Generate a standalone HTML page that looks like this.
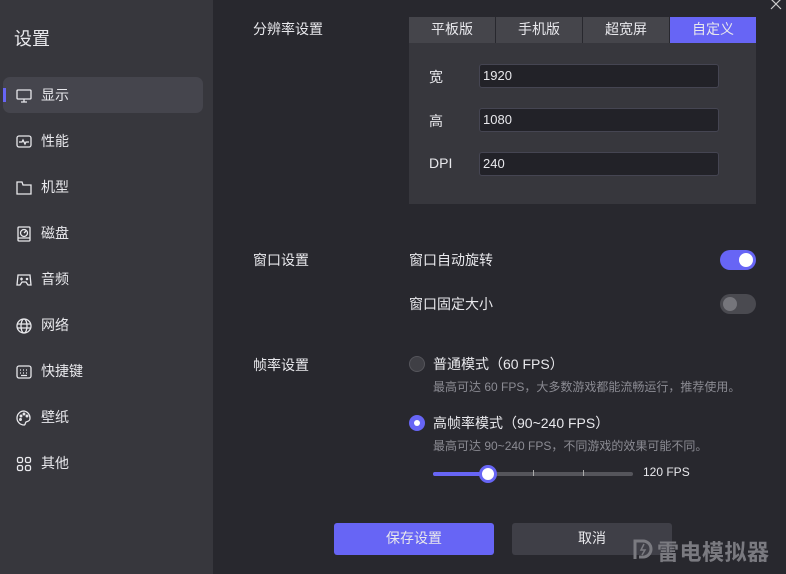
<!DOCTYPE html>
<html><head><meta charset="utf-8"><style>
*{margin:0;padding:0;box-sizing:border-box}
body{width:786px;height:574px;background:#28282e;font-family:"Liberation Sans","Noto Sans CJK SC",sans-serif;color:#e8e8ec;position:relative;overflow:hidden;font-size:14px}
.a{position:absolute}
.side{left:0;top:0;width:213px;height:574px;background:#37373d}
.item{left:3px;width:200px;height:36px;border-radius:7px}
.tab{top:17px;height:26px;width:86px;background:#45454b;text-align:center;line-height:24px;font-size:14px}
.inp{left:479px;width:240px;height:24px;background:#222228;border:1px solid #454552;border-radius:3px;font-size:13px;line-height:21px;padding-left:3px}
.lab{font-size:14px}
.tog{width:36px;height:20px;border-radius:10px}
.tog i{position:absolute;top:3px;width:14px;height:14px;border-radius:50%}
.desc{font-size:12px;color:#8b8b93}
.btn{top:523px;width:160px;height:32px;border-radius:3px;text-align:center;line-height:31px;font-size:14px}
</style></head><body>
<div class="a side"></div>
<div class="a" style="left:14px;top:25px;font-size:18px">设置</div>
<div class="a item" style="top:77px;background:#45454d"></div>
<div class="a" style="left:3px;top:88px;width:3px;height:14px;background:#6765f5"></div>
<svg class="a" style="left:16px;top:88px" width="16" height="16" fill="none" stroke="#e8e8ec" stroke-width="1.3"><rect x="1" y="2" width="14" height="9" rx="1"/><path d="M8 11v3M5 14h6"/></svg>
<div class="a" style="left:41px;top:85px">显示</div>
<svg class="a" style="left:16px;top:134px" width="16" height="16" fill="none" stroke="#e8e8ec" stroke-width="1.3"><rect x="1" y="2" width="14" height="11" rx="2"/><path d="M3 8h3l1-2 2 4 1-2h3"/></svg>
<div class="a" style="left:41px;top:131px">性能</div>
<svg class="a" style="left:16px;top:180px" width="16" height="16" fill="none" stroke="#e8e8ec" stroke-width="1.3"><path d="M1 2h5l1 3h8v9H1z"/></svg>
<div class="a" style="left:41px;top:177px">机型</div>
<svg class="a" style="left:16px;top:226px" width="16" height="16" fill="none" stroke="#e8e8ec" stroke-width="1.3"><rect x="2" y="1" width="12" height="14" rx="1"/><circle cx="8" cy="7" r="3.5"/><path d="M8 7l2-2M2 12h12"/></svg>
<div class="a" style="left:41px;top:223px">磁盘</div>
<svg class="a" style="left:16px;top:272px" width="16" height="16" fill="none" stroke="#e8e8ec" stroke-width="1.3"><path d="M2 3h12l1 10-3 0-2-3H6l-2 3-3 0z"/><path d="M4 7h3M5.5 5.5v3"/><circle cx="11" cy="7" r=".6"/></svg>
<div class="a" style="left:41px;top:269px">音频</div>
<svg class="a" style="left:16px;top:318px" width="16" height="16" fill="none" stroke="#e8e8ec" stroke-width="1.3"><circle cx="8" cy="8" r="7"/><ellipse cx="8" cy="8" rx="3" ry="7"/><path d="M1 6h14M1 10h14"/></svg>
<div class="a" style="left:41px;top:315px">网络</div>
<svg class="a" style="left:16px;top:364px" width="16" height="16" fill="none" stroke="#e8e8ec" stroke-width="1.3"><rect x="1" y="2" width="14" height="12" rx="2"/><path d="M4 6h1M7 6h1M10 6h1M4 9h1M7 9h1M10 9h1M5 11.5h6"/></svg>
<div class="a" style="left:41px;top:361px">快捷键</div>
<svg class="a" style="left:16px;top:410px" width="16" height="16" fill="none" stroke="#e8e8ec" stroke-width="1.3"><path d="M8 1a7 7 0 1 0 0 14c1.5 0 1-2 2-3s4 0 4-4A7 7 0 0 0 8 1z"/><circle cx="5" cy="6" r=".8"/><circle cx="8" cy="4" r=".8"/><circle cx="11" cy="6" r=".8"/><circle cx="4.5" cy="9.5" r=".8"/></svg>
<div class="a" style="left:41px;top:407px">壁纸</div>
<svg class="a" style="left:16px;top:456px" width="16" height="16" fill="none" stroke="#e8e8ec" stroke-width="1.3"><rect x="1.5" y="1.5" width="5" height="5" rx="1.5"/><rect x="9.5" y="1.5" width="5" height="5" rx="1.5"/><rect x="1.5" y="9.5" width="5" height="5" rx="1.5"/><rect x="9.5" y="9.5" width="5" height="5" rx="1.5"/></svg>
<div class="a" style="left:41px;top:453px">其他</div>

<svg class="a" style="left:770px;top:0" width="12" height="10" stroke="#ccc" stroke-width="1.2"><path d="M1 -1l10 10M11 -1L1 9"/></svg>

<div class="a lab" style="left:253px;top:19px">分辨率设置</div>
<div class="a" style="left:409px;top:43px;width:347px;height:161px;background:#37373d"></div>
<div class="a tab" style="left:409px">平板版</div>
<div class="a tab" style="left:496px">手机版</div>
<div class="a tab" style="left:583px">超宽屏</div>
<div class="a tab" style="left:670px;background:#6765f5">自定义</div>
<div class="a lab" style="left:429px;top:67px">宽</div>
<div class="a lab" style="left:429px;top:111px">高</div>
<div class="a lab" style="left:429px;top:155px">DPI</div>
<div class="a inp" style="top:64px">1920</div>
<div class="a inp" style="top:108px">1080</div>
<div class="a inp" style="top:152px">240</div>

<div class="a lab" style="left:253px;top:250px">窗口设置</div>
<div class="a lab" style="left:409px;top:250px">窗口自动旋转</div>
<div class="a tog" style="left:720px;top:250px;background:#6765f5"><i style="left:19px;background:#fff"></i></div>
<div class="a lab" style="left:409px;top:294px">窗口固定大小</div>
<div class="a tog" style="left:720px;top:294px;background:#4a4a50"><i style="left:3px;background:#75757b"></i></div>

<div class="a lab" style="left:253px;top:355px">帧率设置</div>
<div class="a" style="left:409px;top:356px;width:16px;height:16px;border-radius:50%;background:#3f3f45;border:1px solid #55555b"></div>
<div class="a lab" style="left:433px;top:354px">普通模式（60 FPS）</div>
<div class="a desc" style="left:433px;top:378px">最高可达 60 FPS，大多数游戏都能流畅运行，推荐使用。</div>
<div class="a" style="left:409px;top:415px;width:16px;height:16px;border-radius:50%;background:#6765f5"></div>
<div class="a" style="left:414px;top:420px;width:6px;height:6px;border-radius:50%;background:#fff"></div>
<div class="a lab" style="left:433px;top:413px">高帧率模式（90~240 FPS）</div>
<div class="a desc" style="left:433px;top:437px">最高可达 90~240 FPS，不同游戏的效果可能不同。</div>
<div class="a" style="left:433px;top:472px;width:200px;height:4px;border-radius:2px;background:#55555b"></div>
<div class="a" style="left:433px;top:472px;width:55px;height:4px;border-radius:2px;background:#6765f5"></div>
<div class="a" style="left:533px;top:470px;width:1px;height:6px;background:#aaa"></div>
<div class="a" style="left:583px;top:470px;width:1px;height:6px;background:#aaa"></div>
<div class="a" style="left:479px;top:465px;width:18px;height:18px;border-radius:50%;background:#fff;border:3px solid #6765f5"></div>
<div class="a" style="left:643px;top:465px;font-size:12px">120 FPS</div>

<div class="a btn" style="left:334px;background:#6765f5">保存设置</div>
<div class="a btn" style="left:512px;background:#3f3f47">取消</div>
<svg class="a" style="left:632px;top:538px" width="22" height="22" fill="none" stroke="#7a7a80" stroke-width="3"><path d="M3 21V3h8a8 8 0 0 1 0 16H7"/><path d="M12 6l-3 6h4l-3 5" stroke-width="1.5"/></svg>
<div class="a" style="left:657px;top:535px;font-size:22px;font-weight:bold;color:#7a7a80;letter-spacing:0.5px">雷电模拟器</div>
</body></html>
